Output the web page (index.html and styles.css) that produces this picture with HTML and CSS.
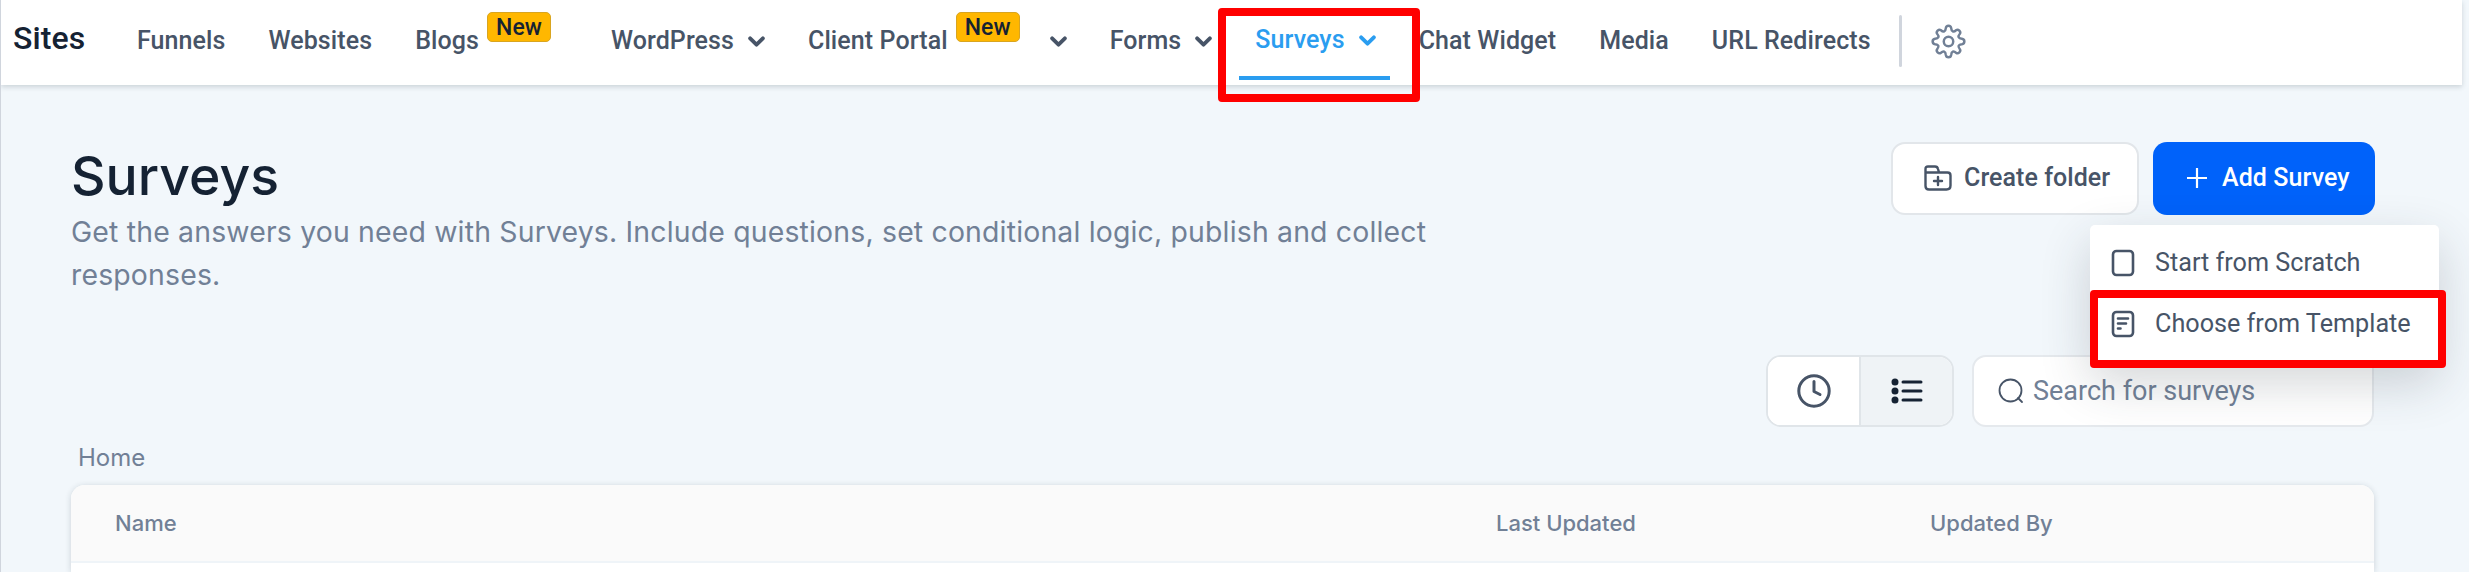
FILE: index.html
```
<!DOCTYPE html>
<html lang="en">
<head>
    <meta charset="UTF-8">
    <meta name="viewport" content="width=device-width, initial-scale=1.0">
    <title>Surveys</title>
    <link rel="stylesheet" href="styles.css">
</head>
<body>
    <header class="topbar">
        <div class="brand">Sites</div>
        <nav class="nav">
            <a class="nav-item">Funnels</a>
            <a class="nav-item">Websites</a>
            <a class="nav-item has-badge">Blogs <span class="badge">New</span></a>
            <a class="nav-item">WordPress
                <svg class="chevron" viewBox="0 0 16 10"><path d="M2 2l6 6 6-6"/></svg>
            </a>
            <a class="nav-item portal">Client Portal <span class="badge">New</span>
                <svg class="chevron" viewBox="0 0 16 10"><path d="M2 2l6 6 6-6"/></svg>
            </a>
            <a class="nav-item">Forms
                <svg class="chevron" viewBox="0 0 16 10"><path d="M2 2l6 6 6-6"/></svg>
            </a>
            <a class="nav-item active">Surveys
                <svg class="chevron" viewBox="0 0 16 10"><path d="M2 2l6 6 6-6"/></svg>
                <span class="highlight highlight-nav"></span>
            </a>
            <a class="nav-item">Chat Widget</a>
            <a class="nav-item">Media</a>
            <a class="nav-item">URL Redirects</a>
        </nav>
        <div class="divider"></div>
        <svg class="gear" viewBox="0 0 34 34">
            <path d="M14.4 4C14.8 .8 19.2 .8 19.6 4C19.9 7.4 21.9 8.2 24.3 6.1C26.5 4.4 29.6 7.5 27.9 9.7C25.8 12.1 26.6 14.1 30 14.4C33.2 14.8 33.2 19.2 30 19.6C26.6 19.9 25.8 21.9 27.9 24.3C29.6 26.5 26.5 29.6 24.3 27.9C21.9 25.8 19.9 26.6 19.6 30C19.2 33.2 14.8 33.2 14.4 30C14.1 26.6 12.1 25.8 9.7 27.9C7.5 29.6 4.4 26.5 6.1 24.3C8.2 21.9 7.4 19.9 4 19.6C.8 19.2 .8 14.8 4 14.4C7.4 14.1 8.2 12.1 6.1 9.7C4.4 7.5 7.5 4.4 9.7 6.1C12.1 8.2 14.1 7.4 14.4 4Z"/>
            <circle cx="17" cy="17" r="4.6"/>
        </svg>
    </header>

    <main class="content">
        <div class="page-head">
            <div class="intro">
                <h1>Surveys</h1>
                <p>Get the answers you need with Surveys. Include questions, set conditional logic, publish and collect responses.</p>
            </div>
            <div class="actions">
                <button class="btn btn-folder">
                    <svg width="28" height="26" viewBox="0 0 28 26"><path d="M1.500 7.500V4Q1.500 1.500 4 1.500H11Q13.500 1.500 14 4L15 7.300M1.500 7.500H23.500Q26.500 7.500 26.500 10.500V20.500Q26.500 24.500 22.500 24.500H5Q1.500 24.500 1.500 21V7.500M14 12v8M10 16h8"/></svg>
                    Create folder
                </button>
                <div class="add-wrap">
                    <button class="btn btn-add">
                        <svg width="20" height="20" viewBox="0 0 20 20"><path d="M10 .5v19M.5 10h19"/></svg>
                        Add Survey
                    </button>
                    <div class="menu">
                        <a class="menu-item">
                            <svg width="24" height="28" viewBox="0 0 24 28"><rect x="2" y="2" width="20" height="24" rx="3.500"/></svg>
                            Start from Scratch
                        </a>
                        <a class="menu-item">
                            <svg width="24" height="28" viewBox="0 0 24 28"><rect x="2" y="2" width="20" height="24" rx="3.500"/><path d="M7 8.500h10M7 13.500h8M7 18.500h2.500"/></svg>
                            Choose from Template
                        </a>
                        <span class="highlight highlight-menu"></span>
                    </div>
                </div>
            </div>
        </div>

        <div class="toolbar">
            <div class="view-toggle">
                <button class="toggle">
                    <svg width="34" height="34" viewBox="0 0 34 34"><circle cx="17" cy="17" r="15.200"/><path d="M17 7.500V17.500L23 20.500"/></svg>
                </button>
                <button class="toggle selected">
                    <svg width="32" height="26" viewBox="0 0 32 26"><path d="M12 4h18M12 13h18M12 22h18"/><circle cx="4" cy="4" r="2"/><circle cx="4" cy="13" r="2"/><circle cx="4" cy="22" r="2"/></svg>
                </button>
            </div>
            <div class="search">
                <svg width="26" height="26" viewBox="0 0 26 26"><circle cx="12.500" cy="12.500" r="11"/><path d="M20 20l4 4"/></svg>
                <span>Search for surveys</span>
            </div>
        </div>

        <div class="breadcrumb">Home</div>

        <div class="table">
            <div class="table-head">
                <span>Name</span>
                <span>Last Updated</span>
                <span>Updated By</span>
            </div>
        </div>
    </main>
</body>
</html>
```
FILE: styles.css
```
* {
    box-sizing: border-box;
}

body {
    margin: 0;
    height: 572px;
    overflow: hidden;
    background: #f2f7fb;
    border-left: 1px solid #d0d5dd;
    font-family: Roboto, sans-serif;
    color: #475467;
}

svg {
    fill: none;
    stroke: currentColor;
    stroke-linecap: round;
    stroke-linejoin: round;
    flex: none;
}

button {
    font-family: inherit;
    color: inherit;
}

.topbar {
    display: flex;
    align-items: center;
    width: 2461px;
    height: 85px;
    padding-left: 12px;
    background: #fff;
    box-shadow: 0 2px 5px rgba(30, 50, 60, 0.18);
}

.brand {
    width: 124px;
    padding-bottom: 9px;
    font-size: 32px;
    font-weight: 500;
    letter-spacing: 0.1px;
    color: #152233;
}

.nav {
    display: flex;
    gap: 43px;
    height: 85px;
}

.nav-item {
    position: relative;
    display: flex;
    align-items: center;
    height: 80px;
    font-size: 25px;
    font-weight: 500;
    letter-spacing: 0.09px;
    white-space: nowrap;
}

.badge {
    align-self: flex-start;
    width: 64px;
    height: 30px;
    margin-top: 12px;
    margin-left: 8px;
    border: 1px solid #d9a520;
    border-radius: 5px;
    background: #ffb700;
    color: #152233;
    font-size: 23px;
    line-height: 29px;
    text-align: center;
}

.has-badge {
    margin-right: 17px;
}

.chevron {
    width: 17px;
    height: 11px;
    margin-top: 2px;
    margin-left: 14px;
    stroke-width: 3.6;
}

.portal .chevron {
    margin-left: 30px;
}

.active {
    height: 78px;
    color: #2a9df0;
}

.active::after {
    content: "";
    position: absolute;
    left: -16px;
    right: -14px;
    top: 76px;
    height: 4px;
    background: #2a9df0;
}

.highlight {
    position: absolute;
    z-index: 5;
    border: 8px solid #ff0000;
    border-radius: 4px;
}

.highlight-nav {
    left: -37px;
    top: 8px;
    width: 202px;
    height: 94px;
}

.divider {
    width: 3px;
    height: 52px;
    margin-left: 28px;
    margin-bottom: 3px;
    border-radius: 2px;
    background: #d0d5dd;
}

.gear {
    width: 35px;
    height: 35px;
    margin-left: 29px;
    margin-bottom: 3px;
    color: #718096;
    stroke-width: 2.4;
}

.content {
    height: 487px;
    padding: 57px 94px 0 70px;
    overflow: hidden;
}

.page-head {
    display: flex;
    justify-content: space-between;
    height: 213px;
}

.intro {
    width: 1400px;
    font-family: Inter, sans-serif;
}

h1 {
    margin: 0;
    font-size: 53.5px;
    font-weight: 500;
    line-height: 68px;
    color: #152233;
}

.intro p {
    margin: 0;
    font-size: 28.4px;
    line-height: 43px;
    letter-spacing: 0.18px;
    color: #718096;
}

.actions {
    display: flex;
    gap: 14px;
}

.btn {
    display: flex;
    align-items: center;
    height: 73px;
    padding: 0 0 2px;
    border-radius: 14px;
    font-size: 25px;
    font-weight: 500;
    white-space: nowrap;
}

.btn-folder {
    width: 248px;
    padding-left: 31px;
    gap: 12px;
    border: 2px solid #e2e6ea;
    background: #fff;
    letter-spacing: 0.06px;
}

.btn-folder svg {
    stroke-width: 2.4;
}

.btn-add {
    width: 222px;
    padding-left: 34px;
    gap: 15px;
    border: 0;
    background: #0062fa;
    color: #fff;
    letter-spacing: 0.09px;
}

.btn-add svg {
    stroke-width: 2.2;
}

.add-wrap {
    position: relative;
}

.menu {
    position: absolute;
    z-index: 3;
    top: 83px;
    left: -63px;
    width: 349px;
    height: 140px;
    padding-top: 7px;
    border-radius: 5px;
    background: #fff;
    box-shadow: 0 18px 50px rgba(40, 50, 60, 0.2);
}

.menu-item {
    display: flex;
    align-items: center;
    gap: 20px;
    height: 61px;
    padding-left: 21px;
    font-size: 25.2px;
    white-space: nowrap;
}

.menu-item svg {
    stroke-width: 2.6;
}

.highlight-menu {
    left: 0;
    top: 65px;
    width: 356px;
    height: 78px;
}

.toolbar {
    display: flex;
    justify-content: flex-end;
    gap: 18px;
    height: 72px;
    padding-right: 1px;
}

.view-toggle {
    display: flex;
    width: 188px;
    border: 2px solid #e0e5e9;
    border-radius: 15px;
    background: #fff;
    overflow: hidden;
}

.toggle {
    display: flex;
    flex: 1;
    align-items: center;
    justify-content: center;
    padding: 0;
    border: 0;
    background: #fff;
    stroke-width: 3;
}

.toggle.selected {
    border-left: 2px solid #e0e5e9;
    background: #eff3f6;
    color: #152233;
}

.selected circle {
    fill: currentColor;
}

.search {
    display: flex;
    align-items: center;
    gap: 9px;
    width: 402px;
    padding-left: 24px;
    padding-bottom: 1px;
    border: 2px solid #e5e9ed;
    border-radius: 14px;
    background: #fff;
    font-size: 27px;
}

.search svg {
    stroke-width: 1.8;
}

.search span {
    color: #718096;
}

.breadcrumb {
    height: 58px;
    padding-top: 15px;
    padding-left: 7px;
    font-family: Inter, sans-serif;
    font-size: 24px;
    line-height: 32px;
    color: #718096;
}

.table {
    height: 87px;
    margin-right: 1px;
    border-radius: 14px 14px 0 0;
    background: #fff;
    box-shadow: 0 1px 6px rgba(30, 50, 60, 0.18);
    overflow: hidden;
}

.table-head {
    display: grid;
    grid-template-columns: 1381px 434px 1fr;
    align-items: center;
    height: 78px;
    padding-left: 44px;
    padding-bottom: 1px;
    border-bottom: 2px solid #eff4f8;
    background: #fafafa;
    font-family: Inter, sans-serif;
    font-size: 22px;
    font-weight: 500;
    color: #718096;
}
```
